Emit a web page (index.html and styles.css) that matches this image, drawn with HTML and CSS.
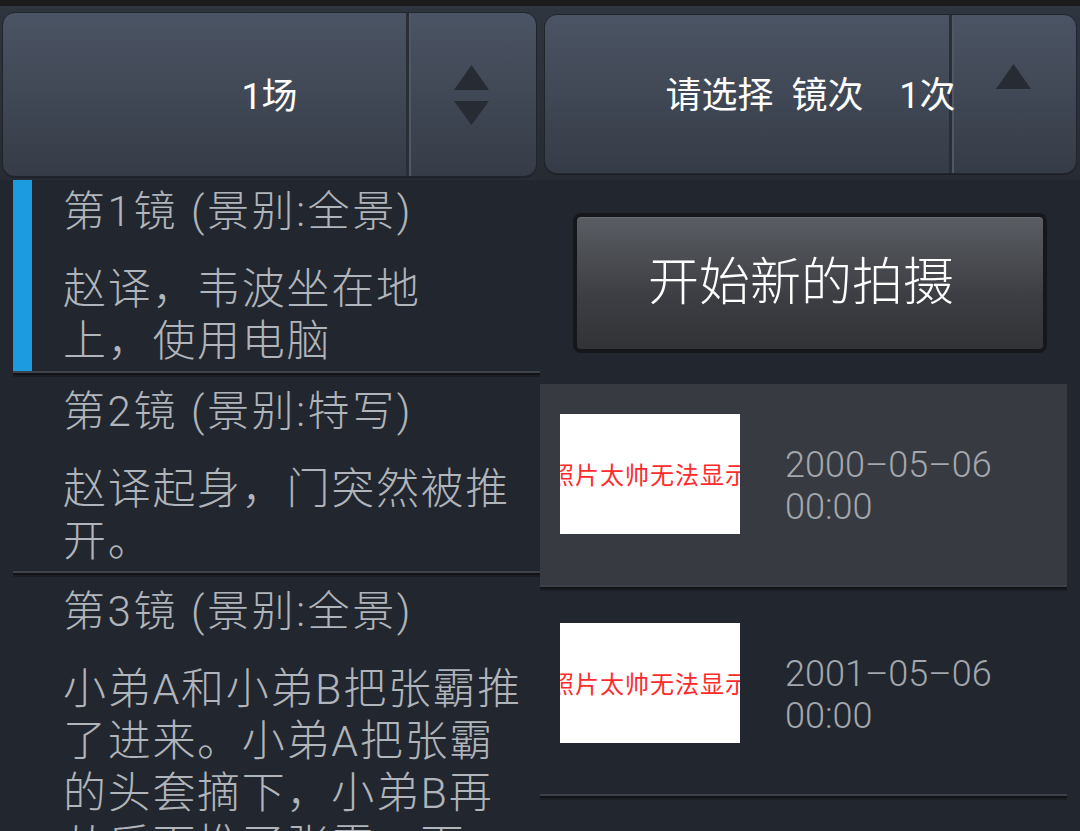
FILE: index.html
```html
<!DOCTYPE html>
<html lang="zh-CN">
<head>
<meta charset="utf-8">
<title>拍摄</title>
<link rel="stylesheet" href="styles.css">
</head>
<body>
<div class="screen">
  <div class="statusbar"></div>
  <header class="header">
    <div class="spinner spinner-left">
      <div class="spin-main"></div>
      <div class="spin-btn">
        <svg class="arrow" viewBox="0 0 35 25" width="35" height="25"><polygon points="17.5,0 35,25 0,25"/></svg>
        <svg class="arrow" viewBox="0 0 35 24" width="35" height="24"><polygon points="0,0 35,0 17.5,24"/></svg>
      </div>
      <div class="spin-label">1场</div>
    </div>
    <div class="spinner spinner-right">
      <div class="spin-main"></div>
      <div class="spin-btn">
        <svg class="arrow" viewBox="0 0 35 25" width="35" height="25"><polygon points="17.5,0 35,25 0,25"/></svg>
        <svg class="arrow arrow-hidden" viewBox="0 0 35 24" width="35" height="24"><polygon points="0,0 35,0 17.5,24"/></svg>
      </div>
      <div class="spin-label">请选择&nbsp;&nbsp;镜次&nbsp;&nbsp;&nbsp;&nbsp;1次</div>
    </div>
  </header>
  <main class="content">
    <ul class="shots">
      <li class="shot">
        <div class="shot-inner active">
          <div class="shot-title">第1镜 (景别:全景)</div>
          <div class="shot-desc">赵译，韦波坐在地<br>上，使用电脑</div>
        </div>
      </li>
      <li class="shot">
        <div class="shot-inner">
          <div class="shot-title">第2镜 (景别:特写)</div>
          <div class="shot-desc">赵译起身，门突然被推开。</div>
        </div>
      </li>
      <li class="shot">
        <div class="shot-inner">
          <div class="shot-title">第3镜 (景别:全景)</div>
          <div class="shot-desc">小弟A和小弟B把张霸推了进来。小弟A把张霸的头套摘下，小弟B再从后面推了张霸一下，再把他按在地上。</div>
        </div>
      </li>
    </ul>
    <section class="takes">
      <button class="new-take" type="button">开始新的拍摄</button>
      <div class="take-list">
        <div class="take take-active">
          <div class="thumb"><span>照片太帅无法显示</span></div>
          <div class="take-date">2000–05–06 00:00</div>
        </div>
        <div class="sep"></div>
        <div class="take">
          <div class="thumb"><span>照片太帅无法显示</span></div>
          <div class="take-date">2001–05–06 00:00</div>
        </div>
        <div class="sep"></div>
      </div>
    </section>
  </main>
</div>
</body>
</html>
```

FILE: styles.css
```css
html, body {
  margin: 0;
  padding: 0;
}
body {
  background: #22262e;
  font-family: Roboto, "Noto Sans CJK SC", sans-serif;
}
.screen {
  width: 1080px;
  height: 831px;
  overflow: hidden;
  background: #22262e;
}
.statusbar {
  height: 6px;
  background: #1b1b1c;
}
.header {
  height: 174px;
  box-sizing: border-box;
  display: flex;
  align-items: flex-start;
  gap: 7px;
  padding: 0 3px 0 2px;
  background: linear-gradient(#2f353f, #272b33);
}
.spinner {
  display: grid;
  grid-template-columns: 1fr 130px;
  grid-template-rows: 1fr;
  box-sizing: border-box;
  border: 1px solid #20242b;
  border-radius: 13px;
  background: linear-gradient(#4b5464, #363c47);
  overflow: hidden;
  box-shadow: 0 1px 0 rgba(0,0,0,0.25);
}
.spinner-left {
  width: 535px;
  height: 165px;
  margin-top: 6px;
}
.spinner-right {
  width: 533px;
  height: 160px;
  margin-top: 8px;
  grid-template-columns: 1fr 127px;
}
.spin-main {
  grid-area: 1 / 1;
}
.spin-btn {
  grid-area: 1 / 2;
  border-left: 3px solid #2a2f37;
  box-shadow: inset 2px 0 0 #505866;
  display: flex;
  flex-direction: column;
  align-items: center;
  justify-content: center;
  gap: 11px;
  padding-right: 2px;
}
.arrow {
  display: block;
  fill: #272b34;
}
.arrow-hidden {
  visibility: hidden;
}
.spin-label {
  grid-area: 1 / 1 / 2 / 3;
  justify-self: center;
  align-self: center;
  margin-top: 4px;
  color: #ffffff;
  font-size: 36px;
  line-height: 44px;
  white-space: nowrap;
  position: relative;
}
.content {
  display: flex;
}
.shots {
  list-style: none;
  margin: 0;
  padding: 0;
  width: 540px;
  flex: none;
}
.shot {
  margin-left: 13px;
}
.shot::after {
  content: "";
  display: block;
  height: 6px;
  background: linear-gradient(#3d4149 0 2px, #121316 2px 4px, #1b1e23 4px 6px);
}
.shot-inner {
  border-left: 19px solid transparent;
  padding: 6px 0 4px 31px;
  color: #b0b4bb;
  font-weight: 300;
}
.shot-inner.active {
  border-left-color: #1c9be0;
}
.shot + .shot .shot-inner {
  padding-top: 9px;
}
.shot-title {
  font-size: 42px;
  line-height: 52px;
  letter-spacing: 2.6px;
  white-space: nowrap;
}
.shot-desc {
  margin-top: 25px;
  font-size: 43px;
  line-height: 52px;
  letter-spacing: 1.7px;
  width: 470px;
}
.takes {
  flex: 1;
  padding-top: 33px;
}
.new-take {
  display: block;
  box-sizing: border-box;
  width: 474px;
  height: 140px;
  margin: 0 0 0 33px;
  border: 4px solid #15171a;
  border-radius: 8px;
  background: linear-gradient(#5a5d63, #3c3e43 60%, #313337);
  box-shadow: inset 0 1px 0 #6b6e74;
  color: #ffffff;
  font-family: Roboto, "Noto Sans CJK SC", sans-serif;
  font-size: 51px;
  font-weight: 300;
  line-height: 60px;
  padding: 0 18px 0 0;
}
.take-list {
  margin-top: 31px;
  margin-right: 13px;
}
.take {
  display: flex;
  align-items: flex-start;
  padding: 30px 0 51px 20px;
}
.take + .sep + .take {
  padding-top: 32px;
}
.take-active {
  background: #373a40;
}
.thumb {
  width: 180px;
  height: 120px;
  background: #ffffff;
  display: flex;
  align-items: center;
  justify-content: center;
  overflow: hidden;
  flex: none;
}
.thumb span {
  flex: none;
  color: #ff2b2b;
  font-family: "Noto Sans CJK SC", sans-serif;
  font-size: 24px;
  line-height: 28px;
  letter-spacing: 1px;
  white-space: nowrap;
}
.take-date {
  margin-left: 45px;
  margin-top: 30px;
  width: 230px;
  color: #a3a7ae;
  font-size: 36px;
  font-weight: 300;
  line-height: 42px;
}
.sep {
  height: 6px;
  background: linear-gradient(#3d4048 0 2px, #131417 2px 4px, #1b1e23 4px 6px);
}
```
